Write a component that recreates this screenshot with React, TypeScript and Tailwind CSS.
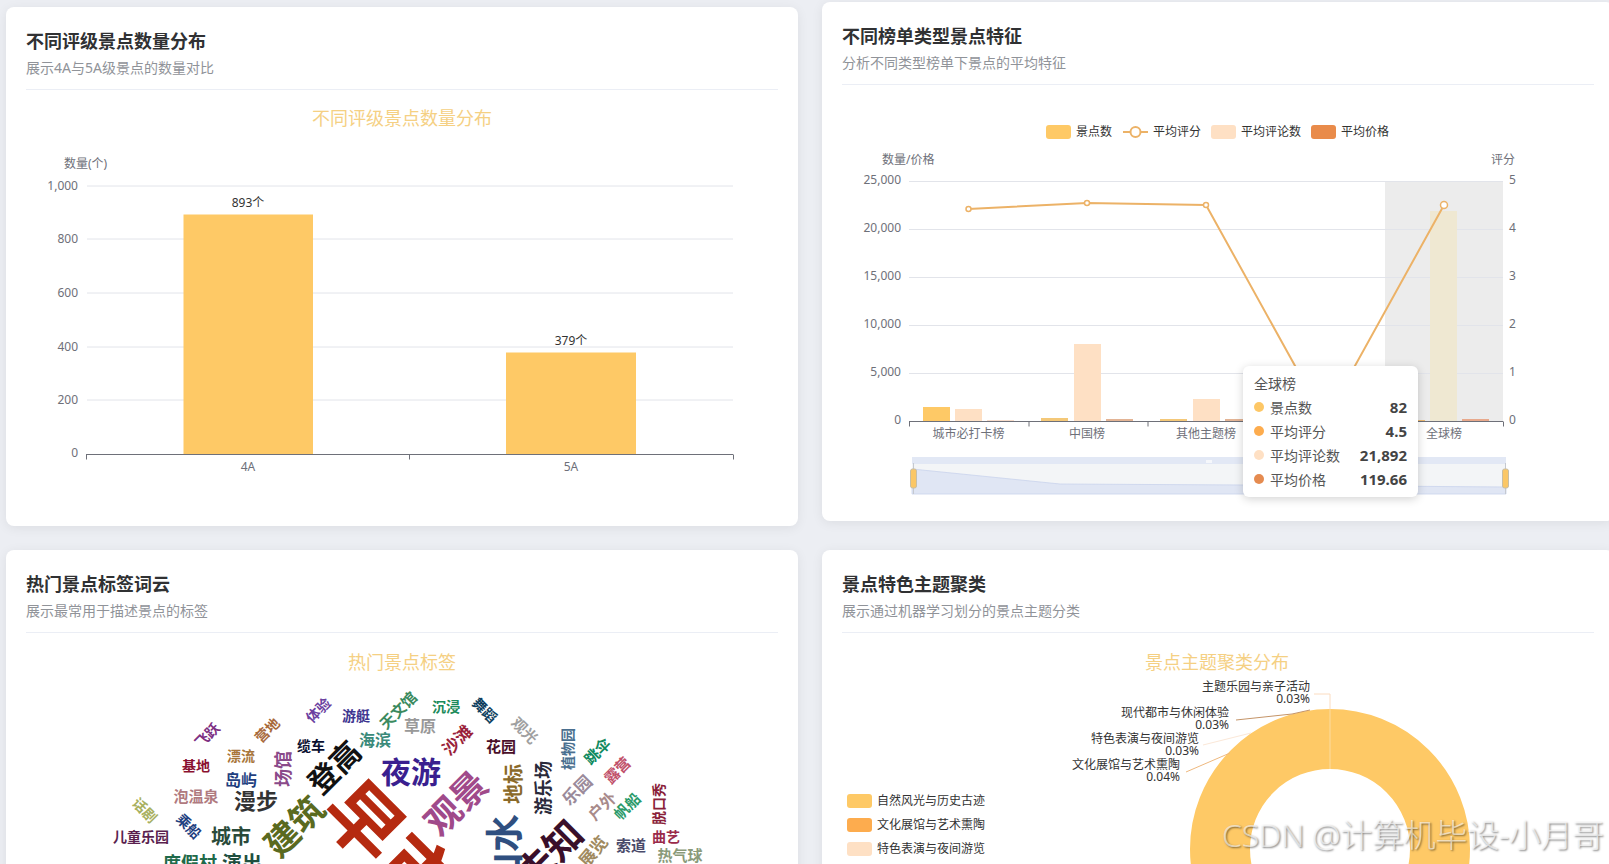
import { ReactNode } from 'react';

const AXIS = '#6e7079';
const GRID = '#e2e4ea';
const GOLD = '#fec966';

interface CardProps {
  title: string;
  subtitle: string;
  className: string;
  children: ReactNode;
}

function Card({ title, subtitle, className, children }: CardProps) {
  return (
    <div className={`bg-white rounded-lg shadow-[0_2px_12px_rgba(0,0,0,0.07)] w-[792px] px-5 pt-[19px] relative overflow-hidden ${className}`}>
      <div className="border-b border-[#ebeef5] pb-[10px]">
        <h3 className="text-[18px] leading-[30px] font-bold text-[#303133]">{title}</h3>
        <p className="text-[14px] leading-[22px] mt-px text-[#909399]">{subtitle}</p>
      </div>
      {children}
    </div>
  );
}

const ratingTicks = [
  ['1,000', 186],
  ['800', 239],
  ['600', 293],
  ['400', 347],
  ['200', 400],
  ['0', 452.5],
] as const;

function RatingChart() {
  return (
    <svg viewBox="26 90 752 430" className="w-[752px] h-[430px] block">
      <text x="402" y="125" textAnchor="middle" fontSize="18" fill="#f5d083">不同评级景点数量分布</text>
      <text x="64" y="168" fontSize="12" fill={AXIS}>数量(个)</text>
      {ratingTicks.map(([label, y]) => (
        <g key={label}>
          {label !== '0' && <line x1="87" x2="733" y1={y} y2={y} stroke={GRID} />}
          <text x="78" y={y + 4} textAnchor="end" fontSize="12" fill={AXIS}>{label}</text>
        </g>
      ))}
      <rect x="183.5" y="214.5" width="129.5" height="240" fill={GOLD} />
      <rect x="506" y="352.5" width="130" height="102" fill={GOLD} />
      <text x="248" y="207" textAnchor="middle" fontSize="12" fill="#333">893个</text>
      <text x="571" y="345" textAnchor="middle" fontSize="12" fill="#333">379个</text>
      <path d="M86 454.5H733M86.5 454.5v5M409.5 454.5v5M733.5 454.5v5" stroke={AXIS} fill="none" />
      <text x="248" y="471" textAnchor="middle" fontSize="12" fill={AXIS}>4A</text>
      <text x="571" y="471" textAnchor="middle" fontSize="12" fill={AXIS}>5A</text>
    </svg>
  );
}

const leftTicks = [
  ['25,000', 181],
  ['20,000', 229],
  ['15,000', 277],
  ['10,000', 325],
  ['5,000', 373],
  ['0', 421],
] as const;

// x, width, top, colour
const featureBars: [number, number, number, string][] = [
  [923, 27, 407, GOLD],
  [955, 27, 409, '#fee0c4'],
  [987, 27, 420, '#f6dccb'],
  [1041, 27, 418, '#f4c878'],
  [1074, 27, 344, '#fee0c4'],
  [1106, 27, 419, '#e3b495'],
  [1160, 27, 419, '#f4c878'],
  [1193, 27, 399, '#fee0c4'],
  [1225, 27, 419, '#e3b495'],
  [1398, 27, 420, '#eebb74'],
  [1430, 27, 211, '#efe8d2'],
  [1462, 27, 419, '#e8a98c'],
];

const linePoints: [number, number][] = [
  [968.5, 209],
  [1087, 203],
  [1206, 205],
  [1325, 420],
  [1444, 205],
];

function FeatureChart() {
  return (
    <svg viewBox="842 85 752 430" className="w-[752px] h-[430px] block">
      <g fontSize="12" fill="#333">
        <rect x="1046" y="125" width="25" height="14" rx="3" fill={GOLD} />
        <text x="1076" y="136">景点数</text>
        <path d="M1123 132h25" stroke="#ecb267" strokeWidth="2" />
        <circle cx="1135.5" cy="132" r="5" fill="#fff" stroke="#ecb267" strokeWidth="2" />
        <text x="1153" y="136">平均评分</text>
        <rect x="1211" y="125" width="25" height="14" rx="3" fill="#fee0c4" />
        <text x="1241" y="136">平均评论数</text>
        <rect x="1311" y="125" width="25" height="14" rx="3" fill="#e98b4a" />
        <text x="1341" y="136">平均价格</text>
      </g>
      <text x="882" y="164" fontSize="12" fill={AXIS}>数量/价格</text>
      <text x="1491" y="164" fontSize="12" fill={AXIS}>评分</text>
      <rect x="1385" y="181" width="118" height="240" fill="#ececec" />
      {leftTicks.map(([label, y], i) => (
        <g key={label} fontSize="12" fill={AXIS}>
          {label !== '0' && <line x1="909" x2="1503" y1={y + 0.5} y2={y + 0.5} stroke={GRID} />}
          <text x="901" y={y + 3} textAnchor="end">{label}</text>
          <text x="1509" y={y + 3}>{5 - i}</text>
        </g>
      ))}
      {featureBars.map(([x, w, top, color]) => (
        <rect key={x} x={x} y={top} width={w} height={421 - top} fill={color} />
      ))}
      <path d="M909 421.5H1503M909.5 421.5v5M1029 421.5v5M1148 421.5v5M1266.5 421.5v5M1385 421.5v5M1503.5 421.5v5" stroke={AXIS} fill="none" />
      <g fontSize="12" fill={AXIS} textAnchor="middle">
        <text x="968.5" y="438">城市必打卡榜</text>
        <text x="1087" y="438">中国榜</text>
        <text x="1206" y="438">其他主题榜</text>
        <text x="1444" y="438">全球榜</text>
      </g>
      <polyline points={linePoints.map((p) => p.join(',')).join(' ')} fill="none" stroke="#ecb267" strokeWidth="2" />
      {linePoints.map(([x, y], i) => (
        <circle key={x} cx={x} cy={y} r={i === 4 ? 3.5 : 2.5} fill="#fff" stroke="#ecb267" strokeWidth="1.5" />
      ))}
      <rect x="912" y="457" width="594" height="7" fill="#e2e8f5" />
      <rect x="912" y="464" width="594" height="30" fill="#f3f5f7" />
      <path d="M912 469L1060 484L1244 485L1506 487V494H912Z" fill="#e0e6f4" stroke="#c9d3ec" strokeWidth="0.8" />
      <rect x="1206" y="460" width="6" height="3" fill="#f5f7fb" />
      <path d="M913.5 463V494M1505.5 463V494" stroke="#c5c9d0" />
      <rect x="910.5" y="469" width="6" height="19" rx="2" fill="#fbc766" stroke="#c8bea6" />
      <rect x="1502.5" y="469" width="6" height="19" rx="2" fill="#fbc766" stroke="#c8bea6" />
    </svg>
  );
}

// text, x, y, size, rotation, colour
const words: [string, number, number, number, number, string][] = [
  ['飞跃', 207, 735, 14, -45, '#7d2f82'],
  ['营地', 267, 730, 14, -45, '#a8693a'],
  ['体验', 318, 710, 14, -45, '#6b3fa0'],
  ['游艇', 356, 715, 14, 0, '#3d3590'],
  ['天文馆', 398, 710, 15, -45, '#3a8a5e'],
  ['沉浸', 446, 706, 14, 0, '#1a8a5a'],
  ['舞蹈', 485, 710, 14, 45, '#0f3f5f'],
  ['观光', 525, 730, 15, 45, '#a0a0a0'],
  ['植物园', 567, 749, 14, -90, '#4a6f8f'],
  ['跳伞', 597, 751, 15, -45, '#0f8a5f'],
  ['露营', 617, 770, 15, -45, '#c0506a'],
  ['脱口秀', 658, 804, 14, -90, '#8a1f3a'],
  ['曲艺', 666, 836, 14, 0, '#9a2a4a'],
  ['帆船', 627, 806, 15, -45, '#2a9a6a'],
  ['户外', 602, 806, 16, -45, '#a88a8a'],
  ['乐园', 577, 790, 17, -45, '#9a8a9a'],
  ['游乐场', 543, 788, 18, -90, '#2a2a3a'],
  ['地标', 513, 784, 20, -90, '#8a6a2a'],
  ['花园', 501, 746, 15, 0, '#4a0f2a'],
  ['沙滩', 457, 740, 17, -45, '#9a1f3a'],
  ['草原', 420, 726, 16, 0, '#999999'],
  ['海滨', 375, 740, 16, 0, '#3a8a7a'],
  ['缆车', 311, 745, 14, 0, '#0a1030'],
  ['登高', 334, 767, 30, -45, '#111111'],
  ['漂流', 241, 755, 14, 0, '#a8763a'],
  ['基地', 196, 765, 14, 0, '#8a1030'],
  ['场馆', 283, 769, 18, -90, '#8a4a8a'],
  ['岛屿', 241, 780, 16, 0, '#1f3f7f'],
  ['泡温泉', 196, 796, 15, 0, '#b07a80'],
  ['漫步', 256, 800, 22, 0, '#333333'],
  ['夜游', 411, 771, 30, 0, '#3a1f8f'],
  ['建筑', 294, 826, 34, -45, '#5a6a1f'],
  ['话剧', 145, 810, 14, 45, '#a8b060'],
  ['乘船', 189, 826, 14, 45, '#1f3f7f'],
  ['儿童乐园', 141, 836, 14, 0, '#5a1f4f'],
  ['城市', 231, 836, 20, 0, '#2a4a3a'],
  ['度假村', 190, 863, 18, 0, '#1f6a4a'],
  ['演出', 242, 863, 20, 0, '#1f4f3f'],
  ['早市', 392, 847, 76, 45, '#b52a10'],
  ['观景', 456, 803, 36, -45, '#a04a8a'],
  ['山水', 503, 852, 38, -90, '#2f4f80'],
  ['未知', 549, 853, 38, -45, '#3a0f2a'],
  ['展览', 593, 851, 17, -50, '#a08a60'],
  ['索道', 631, 845, 15, 0, '#4a4a6a'],
  ['热气球', 680, 855, 15, 0, '#8a9a7a'],
];

function TagCloud() {
  return (
    <svg viewBox="26 633 752 231" className="w-[752px] h-[231px] block">
      <text x="402" y="669" textAnchor="middle" fontSize="18" fill="#f5d083">热门景点标签</text>
      {words.map(([text, x, y, size, rotate, color]) => (
        <text
          key={text}
          x={x}
          y={y}
          fontSize={size}
          fontWeight="bold"
          fill={color}
          textAnchor="middle"
          dominantBaseline="central"
          transform={`rotate(${rotate} ${x} ${y})`}
        >
          {text}
        </text>
      ))}
    </svg>
  );
}

function ThemeChart() {
  return (
    <svg viewBox="842 633 752 231" className="w-[752px] h-[231px] block">
      <text x="1217" y="669" textAnchor="middle" fontSize="18" fill="#f5d083">景点主题聚类分布</text>
      <circle cx="1330" cy="849" r="110" fill="none" stroke={GOLD} strokeWidth="60" />
      <path d="M1330 709V769" stroke="#fbdca0" />
      <path d="M1330 709V694H1314" stroke="#fbdcc0" fill="none" />
      <path d="M1310 710L1292 714L1236 720" stroke="#c49468" fill="none" />
      <path d="M1251 733L1203 745" stroke="#fbe8d8" fill="none" />
      <path d="M1230 753L1186 772" stroke="#eeb87e" fill="none" />
      <g fontSize="12" fill="#333" textAnchor="end">
        <text x="1310" y="691">主题乐园与亲子活动</text>
        <text x="1310" y="703">0.03%</text>
        <text x="1229" y="717">现代都市与休闲体验</text>
        <text x="1229" y="729">0.03%</text>
        <text x="1199" y="743">特色表演与夜间游览</text>
        <text x="1199" y="755">0.03%</text>
        <text x="1180" y="769">文化展馆与艺术熏陶</text>
        <text x="1180" y="781">0.04%</text>
      </g>
      <g fontSize="12" fill="#333">
        <rect x="847" y="794" width="25" height="14" rx="3" fill={GOLD} />
        <text x="877" y="804.5">自然风光与历史古迹</text>
        <rect x="847" y="818" width="25" height="14" rx="3" fill="#fdac4e" />
        <text x="877" y="828.5">文化展馆与艺术熏陶</text>
        <rect x="847" y="842" width="25" height="14" rx="3" fill="#fee0c4" />
        <text x="877" y="852.5">特色表演与夜间游览</text>
      </g>
    </svg>
  );
}

const tooltipRows = [
  ['景点数', '82', 'bg-[#fdc766]'],
  ['平均评分', '4.5', 'bg-[#fdac4e]'],
  ['平均评论数', '21,892', 'bg-[#fee0c4]'],
  ['平均价格', '119.66', 'bg-[#e58b50]'],
];

function ChartTooltip() {
  return (
    <div className="absolute left-[421px] top-[364px] w-[175px] h-[131px] bg-white rounded-md shadow-[0_2px_10px_rgba(0,0,0,0.18)] px-[11px] pt-[7px]">
      <div className="text-[14px] leading-[22px] text-[#555]">全球榜</div>
      {tooltipRows.map(([label, value, dot]) => (
        <div key={label} className="flex items-center h-[24px] text-[14px]">
          <span className={`w-[10px] h-[10px] rounded-full mr-[6px] ${dot}`} />
          <span className="text-[#555]">{label}</span>
          <span className="ml-auto text-[15px] font-bold text-[#444]">{value}</span>
        </div>
      ))}
    </div>
  );
}

export default function App() {
  return (
    <div className="w-[1609px] h-[864px] overflow-hidden relative bg-[#eceef3] flex gap-6 pl-[6px] font-['Noto_Sans','Noto_Sans_CJK_SC',sans-serif]">
      <div className="pt-[7px] shrink-0">
        <Card title="不同评级景点数量分布" subtitle="展示4A与5A级景点的数量对比" className="h-[519px]">
          <RatingChart />
        </Card>
        <Card title="热门景点标签词云" subtitle="展示最常用于描述景点的标签" className="mt-6 h-[519px]">
          <TagCloud />
        </Card>
      </div>
      <div className="pt-[2px] shrink-0">
        <Card title="不同榜单类型景点特征" subtitle="分析不同类型榜单下景点的平均特征" className="h-[519px]">
          <FeatureChart />
          <ChartTooltip />
        </Card>
        <Card title="景点特色主题聚类" subtitle="展示通过机器学习划分的景点主题分类" className="mt-[29px] h-[519px]">
          <ThemeChart />
        </Card>
      </div>
      <div className="absolute left-[1222px] top-[813px] text-[32px] leading-[44px] tracking-[-0.3px] font-light whitespace-nowrap text-white/60 [text-shadow:1px_1px_2px_rgba(0,0,0,0.5)]">
        CSDN @计算机毕设-小月哥
      </div>
    </div>
  );
}
